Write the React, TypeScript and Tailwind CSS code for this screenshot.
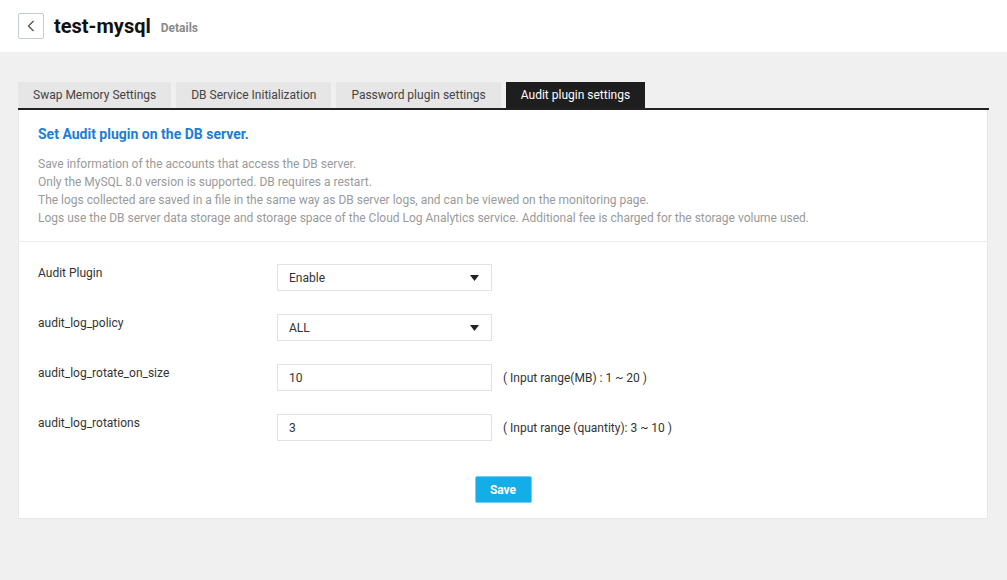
import { useState } from 'react'

const tabs = ['Swap Memory Settings', 'DB Service Initialization', 'Password plugin settings', 'Audit plugin settings']

const notes = [
  'Save information of the accounts that access the DB server.',
  'Only the MySQL 8.0 version is supported. DB requires a restart.',
  'The logs collected are saved in a file in the same way as DB server logs, and can be viewed on the monitoring page.',
  'Logs use the DB server data storage and storage space of the Cloud Log Analytics service. Additional fee is charged for the storage volume used.',
]

function Caret() {
  return (
    <svg width="9" height="6" viewBox="0 0 9 6" className="shrink-0">
      <path d="M0 0h9L4.5 6z" fill="#222" />
    </svg>
  )
}

function SelectBox({ value }: { value: string }) {
  return (
    <div className="w-[215px] h-[27px] border border-[#e2e2e2] flex items-center justify-between pl-[11px] pr-[12px] text-[12px] text-[#333]">
      <span>{value}</span>
      <Caret />
    </div>
  )
}

function InputBox({ value }: { value: string }) {
  return (
    <input
      defaultValue={value}
      className="w-[215px] h-[27px] border border-[#e2e2e2] pl-[11px] text-[12px] text-[#333] outline-none"
    />
  )
}

function Row({ label, children }: { label: string; children: React.ReactNode }) {
  return (
    <div className="flex items-start h-[50px]">
      <div className="w-[239px] pt-[1px] text-[12px] text-[#333] leading-[16px]">{label}</div>
      <div className="flex items-center">{children}</div>
    </div>
  )
}

export default function App() {
  const [active, setActive] = useState(3)

  return (
    <div className="min-h-[580px] bg-[#f0f0f0]" style={{ fontFamily: 'Roboto, "Liberation Sans", sans-serif' }}>
      <header className="h-[52px] bg-white flex items-center px-[18px] gap-[10px]">
        <button className="w-[26px] h-[26px] border border-[#c5ccd8] rounded-[2px] flex items-center justify-center">
          <svg width="8" height="12" viewBox="0 0 8 12">
            <path d="M6.5 1L1.5 6l5 5" fill="none" stroke="#555" strokeWidth="1.3" />
          </svg>
        </button>
        <h1 className="text-[20px] font-bold text-[#111] leading-none">test-mysql</h1>
        <span className="text-[12px] font-bold text-[#8a8a8a] mt-[3px]">Details</span>
      </header>

      <main className="px-[18px] pt-[30px]">
        <nav className="flex gap-[5px] border-b-2 border-[#222]">
          {tabs.map((t, i) => (
            <button
              key={t}
              onClick={() => setActive(i)}
              className={
                i === active
                  ? 'h-[26px] px-[15px] text-[12px] bg-[#1e1e1e] text-white'
                  : 'h-[26px] px-[15px] text-[12px] bg-[#e6e6e6] text-[#444]'
              }
            >
              {t}
            </button>
          ))}
        </nav>

        <section className="bg-white w-[970px] border-x border-b border-[#e8e8e8]">
          <div className="px-[19px] pt-[15px] pb-[14px] border-b border-[#ececec]">
            <h2 className="text-[14px] font-bold text-[#1b7ed6] leading-[18px] mb-[12px]">Set Audit plugin on the DB server.</h2>
            <div className="text-[12px] text-[#9a9a9a] leading-[18px]">
              {notes.map((n) => (
                <p key={n}>{n}</p>
              ))}
            </div>
          </div>

          <div className="px-[19px] pt-[22px]">
            <Row label="Audit Plugin">
              <SelectBox value="Enable" />
            </Row>
            <Row label="audit_log_policy">
              <SelectBox value="ALL" />
            </Row>
            <Row label="audit_log_rotate_on_size">
              <InputBox value="10" />
              <span className="ml-[11px] text-[12px] text-[#333]">( Input range(MB) : 1 ~ 20 )</span>
            </Row>
            <Row label="audit_log_rotations">
              <InputBox value="3" />
              <span className="ml-[11px] text-[12px] text-[#333]">( Input range (quantity): 3 ~ 10 )</span>
            </Row>
          </div>

          <div className="flex justify-center pt-[12px] pb-[15px]">
            <button className="w-[57px] h-[27px] bg-[#13aee8] border border-[#6fd0f3] rounded-[2px] text-white text-[12px] font-bold">
              Save
            </button>
          </div>
        </section>
      </main>
    </div>
  )
}
